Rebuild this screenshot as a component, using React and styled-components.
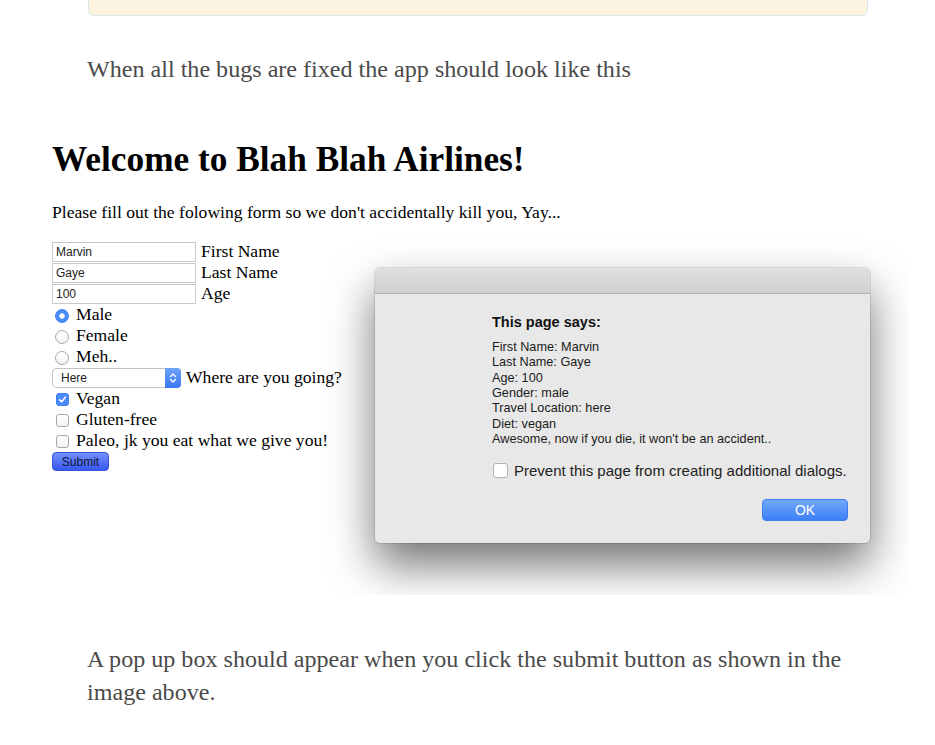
import React from "react";
import styled, { createGlobalStyle } from "styled-components";

const Global = createGlobalStyle`
  html, body { margin: 0; padding: 0; background: #fff; }
  body { font-family: "Liberation Serif", "Times New Roman", serif; }
`;

const Page = styled.div`
  display: flex;
  flex-direction: column;
  align-items: flex-start;
  width: 935px;
  overflow: hidden;
  padding-bottom: 40px;
`;

const Note = styled.div`
  margin: -40px 0 0 88px;
  width: 778px;
  height: 54px;
  background: #fcf4e0;
  border: 1px solid #dce7ed;
  border-radius: 6px;
`;

const Prose = styled.p`
  margin: ${(p) => p.$mt}px 0 0 87px;
  width: 780px;
  font-family: "Liberation Serif", "Times New Roman", serif;
  font-size: 24.1px;
  line-height: 33px;
  color: #4a4a4a;
`;

const Figure = styled.div`
  position: relative;
  box-sizing: border-box;
  margin: 24px 0 0 40px;
  width: 868px;
  height: 485px;
  overflow: hidden;
  padding: 30px 0 0 12px;
  background: #fff;
  font-family: "Liberation Serif", "Times New Roman", serif;
  color: #000;
`;

const Title = styled.h1`
  margin: 0;
  font-size: 35.3px;
  line-height: 40px;
  font-weight: bold;
`;

const Intro = styled.p`
  margin: 22px 0 0;
  font-size: 17.6px;
  line-height: 21px;
`;

const Form = styled.div`
  margin-top: 18px;
  display: flex;
  flex-direction: column;
`;

const Row = styled.div`
  display: flex;
  align-items: center;
  height: 21px;
  font-size: 17.6px;
  line-height: 19px;
`;

const TextBox = styled.input`
  box-sizing: border-box;
  width: 144px;
  height: 20px;
  margin: 0 5px 0 0;
  padding: 0 3px;
  border: 1px solid #c9c9c9;
  font: 12px "Liberation Sans", Arial, sans-serif;
  color: #222;
  background: #fff;
  outline: none;
`;

const Radio = styled.span`
  box-sizing: border-box;
  flex: none;
  width: 14px;
  height: 14px;
  margin: 2px 7px 0 3px;
  border-radius: 50%;
  border: 1px solid ${(p) => (p.$on ? "#3d7ff5" : "#a8a8a8")};
  background: ${(p) =>
    p.$on
      ? "radial-gradient(circle, #fff 0 2.4px, #4b8cf7 3px)"
      : "linear-gradient(#ffffff, #f1f1f1)"};
`;

const Check = styled.span`
  box-sizing: border-box;
  flex: none;
  width: 13px;
  height: 13px;
  margin: 2px 7px 0 4px;
  border-radius: 3px;
  display: flex;
  align-items: center;
  justify-content: center;
  border: 1px solid ${(p) => (p.$on ? "#3d7ff5" : "#a8a8a8")};
  background: ${(p) => (p.$on ? "#4b8cf7" : "linear-gradient(#ffffff, #f3f3f3)")};
`;

const Select = styled.div`
  box-sizing: border-box;
  width: 129px;
  height: 20px;
  margin-right: 5px;
  display: flex;
  align-items: stretch;
  justify-content: space-between;
  border: 1px solid #c4c4c4;
  border-radius: 4px;
  background: #fff;
  padding-left: 8px;
  font: 12px/18px "Liberation Sans", Arial, sans-serif;
  color: #222;
`;

const SelectArrows = styled.span`
  width: 16px;
  margin: -1px -1px -1px 0;
  border-radius: 0 4px 4px 0;
  background: linear-gradient(#6ea4f9, #3a77f2);
  display: flex;
  align-items: center;
  justify-content: center;
`;

const Submit = styled.button`
  box-sizing: border-box;
  width: 57px;
  height: 19px;
  margin: 0;
  padding: 0;
  border: 1px solid #3553d9;
  border-radius: 4px;
  background: linear-gradient(#7291fb, #3858f1);
  font: 12px "Liberation Sans", Arial, sans-serif;
  color: #10163a;
`;

const Dialog = styled.div`
  position: absolute;
  left: 335px;
  top: 158px;
  width: 495px;
  height: 275px;
  display: flex;
  flex-direction: column;
  overflow: hidden;
  background: #e8e8e8;
  border-radius: 5px;
  box-shadow: 0 22px 45px rgba(0, 0, 0, 0.55), 0 0 0 1px rgba(0, 0, 0, 0.1);
  font-family: "Liberation Sans", Arial, sans-serif;
  color: #1b1b1b;
`;

const TitleBar = styled.div`
  flex: none;
  height: 25px;
  background: linear-gradient(#e1e0e1, #d1d0d1);
  border-bottom: 1px solid #b3b2b3;
`;

const DialogBody = styled.div`
  display: flex;
  flex-direction: column;
  padding: 19px 22px 0 117px;
`;

const DTitle = styled.div`
  font-size: 14.5px;
  line-height: 18px;
  font-weight: bold;
  color: #111;
`;

const DLines = styled.div`
  margin-top: 9px;
  font-size: 12.7px;
  line-height: 15.33px;
`;

const PreventRow = styled.label`
  margin-top: 13px;
  height: 20px;
  display: flex;
  align-items: center;
  gap: 6px;
  font-size: 15px;
  color: #222;
`;

const DBox = styled.span`
  box-sizing: border-box;
  width: 15px;
  height: 15px;
  margin-left: 1px;
  border: 1px solid #b2b2b2;
  border-radius: 3px;
  background: #fff;
`;

const ButtonRow = styled.div`
  margin-top: 19px;
  display: flex;
  justify-content: flex-end;
`;

const OkButton = styled.button`
  box-sizing: border-box;
  width: 86px;
  height: 22px;
  margin: 0;
  padding: 0;
  border: 1px solid #3f7ef0;
  border-radius: 4px;
  background: linear-gradient(#70a9fb, #3d7ff6);
  color: #fff;
  font: 14px "Liberation Sans", Arial, sans-serif;
`;

const CheckMark = () => (
  <svg width="9" height="9" viewBox="0 0 9 9">
    <path d="M1.6 4.8 L3.6 6.7 L7.4 2.2" fill="none" stroke="#fff" strokeWidth="1.6" strokeLinecap="round" strokeLinejoin="round" />
  </svg>
);

const Arrows = () => (
  <svg width="8" height="12" viewBox="0 0 8 12">
    <path d="M1.5 4.5 L4 2 L6.5 4.5 M1.5 7.5 L4 10 L6.5 7.5" fill="none" stroke="#fff" strokeWidth="1.3" strokeLinecap="round" strokeLinejoin="round" />
  </svg>
);

const fields = [
  ["Marvin", "First Name"],
  ["Gaye", "Last Name"],
  ["100", "Age"],
];

const genders = [
  ["Male", true],
  ["Female", false],
  ["Meh..", false],
];

const diets = [
  ["Vegan", true],
  ["Gluten-free", false],
  ["Paleo, jk you eat what we give you!", false],
];

const alertLines = [
  "First Name: Marvin",
  "Last Name: Gaye",
  "Age: 100",
  "Gender: male",
  "Travel Location: here",
  "Diet: vegan",
  "Awesome, now if you die, it won't be an accident..",
];

export default function App() {
  return (
    <>
      <Global />
      <Page>
        <Note />
        <Prose $mt={37}>When all the bugs are fixed the app should look like this</Prose>
        <Figure>
          <Title>Welcome to Blah Blah Airlines!</Title>
          <Intro>Please fill out the folowing form so we don't accidentally kill you, Yay...</Intro>
          <Form>
            {fields.map(([v, l]) => (
              <Row key={l}>
                <TextBox readOnly value={v} />
                {l}
              </Row>
            ))}
            {genders.map(([l, on]) => (
              <Row key={l}>
                <Radio $on={on} />
                {l}
              </Row>
            ))}
            <Row>
              <Select>
                Here
                <SelectArrows>
                  <Arrows />
                </SelectArrows>
              </Select>
              Where are you going?
            </Row>
            {diets.map(([l, on]) => (
              <Row key={l}>
                <Check $on={on}>{on && <CheckMark />}</Check>
                {l}
              </Row>
            ))}
            <Row>
              <Submit>Submit</Submit>
            </Row>
          </Form>
          <Dialog>
            <TitleBar />
            <DialogBody>
              <DTitle>This page says:</DTitle>
              <DLines>
                {alertLines.map((t) => (
                  <div key={t}>{t}</div>
                ))}
              </DLines>
              <PreventRow>
                <DBox />
                Prevent this page from creating additional dialogs.
              </PreventRow>
              <ButtonRow>
                <OkButton>OK</OkButton>
              </ButtonRow>
            </DialogBody>
          </Dialog>
        </Figure>
        <Prose $mt={48}>
          A pop up box should appear when you click the submit button as shown in the image above.
        </Prose>
      </Page>
    </>
  );
}
